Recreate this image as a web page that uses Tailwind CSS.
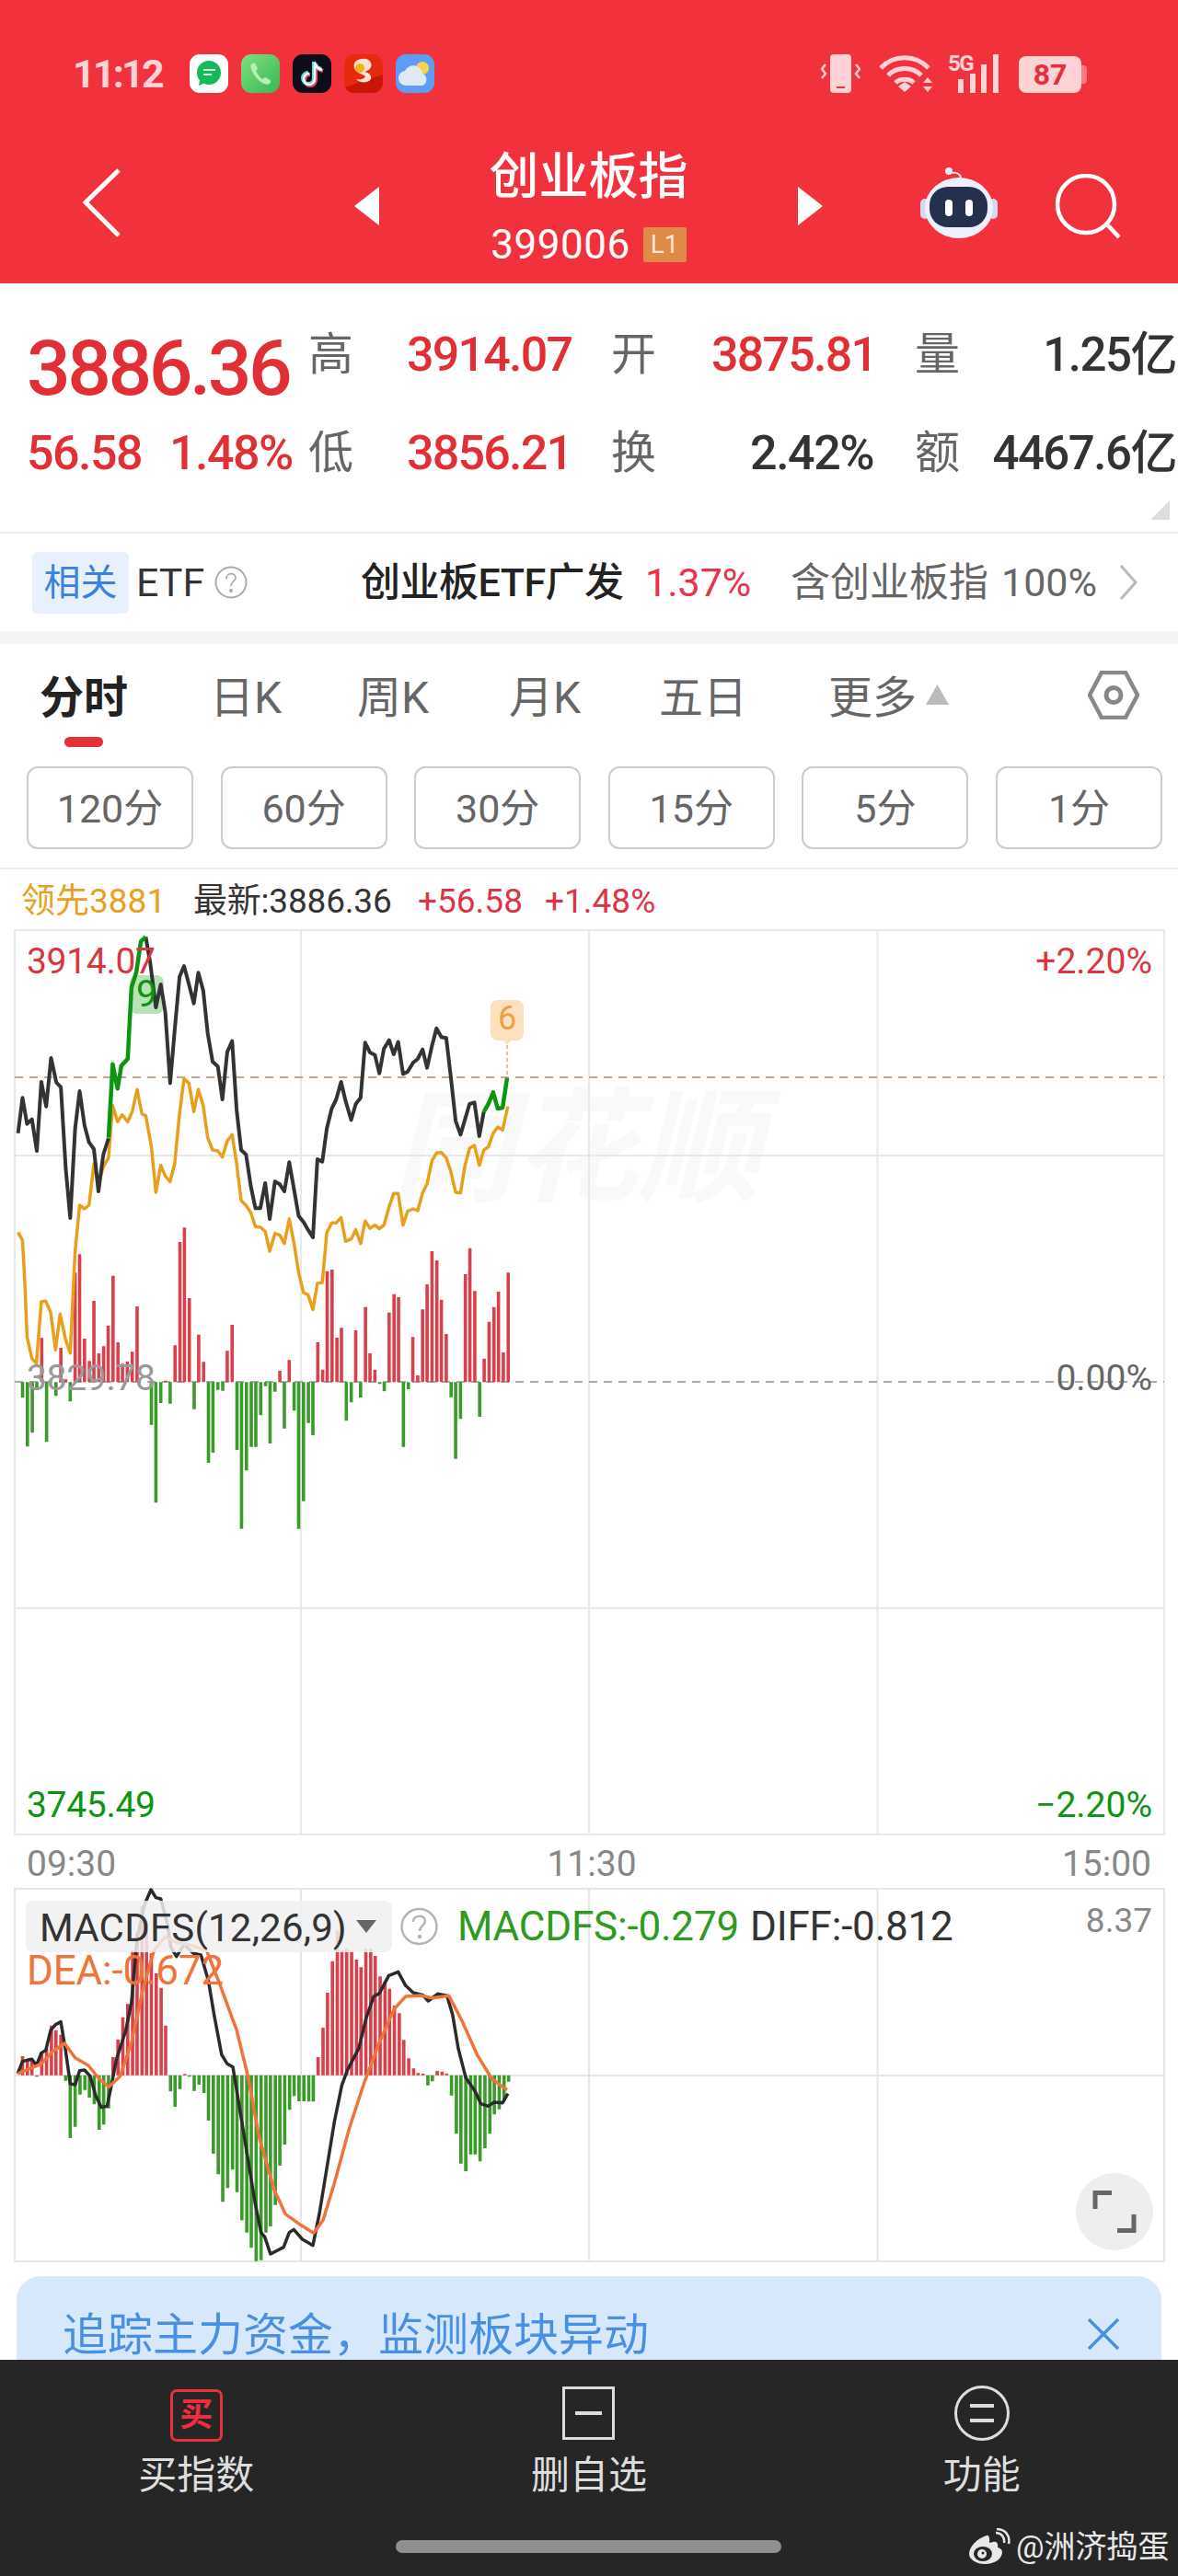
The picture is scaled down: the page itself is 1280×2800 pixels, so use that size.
<!DOCTYPE html>
<html lang="zh-CN">
<head>
    <meta charset="UTF-8">
    <meta name="viewport" content="width=device-width, initial-scale=1.0">
    <title>创业板指</title>
    <script src="https://cdn.jsdelivr.net/npm/@tailwindcss/browser@4"></script>
</head>
<body class="bg-white font-['Roboto','Noto_Sans_CJK_SC',sans-serif]">
<div class="w-[1280px] h-[2800px] flex flex-col overflow-hidden">

    <!-- Red header -->
    <header class="h-[308px] shrink-0 bg-[#f1323c] text-white">
        <div class="h-[160px] flex items-start">
            <span class="ml-[79px] mt-[55px] w-[107px] text-[43px] leading-[50px] font-bold tracking-[-2.8px] text-[#ffd3d6]">11:12</span>
            <div class="ml-[20px] mt-[59px] flex gap-[14px]">
                <svg class="w-[42px] h-[42px] rounded-[11px]" viewBox="0 0 42 42"><rect width="42" height="42" fill="#fff"/><circle cx="21" cy="20" r="13" fill="#16b95a"/><path d="M11 28l-1 6 7-3z" fill="#16b95a"/><path d="M15 17h13M15 22h9" stroke="#d8f5e2" stroke-width="2"/></svg>
                <svg class="w-[42px] h-[42px] rounded-[11px]" viewBox="0 0 42 42"><defs><linearGradient id="ph" x1="0" y1="0" x2="1" y2="1"><stop offset="0" stop-color="#7fe07c"/><stop offset="1" stop-color="#38b755"/></linearGradient></defs><rect width="42" height="42" fill="url(#ph)"/><path d="M11 11c-2 2 1 9 6 15s11 8 14 6c2-2 1-4-1-5l-4-2-3 2c-3-2-5-5-7-9l2-2-2-5c-1-2-3-2-5 0z" fill="#b6efb4"/></svg>
                <svg class="w-[42px] h-[42px] rounded-[11px]" viewBox="0 0 42 42"><rect width="42" height="42" fill="#0c0d18"/><path d="M24 9v18a6 6 0 1 1-6-6M24 9c1 5 4 7 8 8" fill="none" stroke="#f0456a" stroke-width="4" transform="translate(1 1)"/><path d="M24 9v18a6 6 0 1 1-6-6M24 9c1 5 4 7 8 8" fill="none" stroke="#54e3e6" stroke-width="4" transform="translate(-1 -1)"/><path d="M24 9v18a6 6 0 1 1-6-6M24 9c1 5 4 7 8 8" fill="none" stroke="#fff" stroke-width="2.4"/></svg>
                <svg class="w-[42px] h-[42px] rounded-[11px]" viewBox="0 0 42 42"><rect width="42" height="42" fill="#e52a0e"/><path d="M0 36L42 22v20H0z" fill="#c91608"/><path d="M12 8c6-5 15-4 17 1 2 6-3 9-7 10 5 1 8 4 7 8-2 4-12 5-16 0 4 1 9 0 10-3-3-3-10-3-12-9-1-3 0-5 1-7z" fill="#fbe3d3"/><circle cx="17" cy="15" r="5" fill="#f3b21a"/></svg>
                <svg class="w-[42px] h-[42px] rounded-[11px]" viewBox="0 0 42 42"><rect width="42" height="42" fill="#5f9df5"/><circle cx="29" cy="15" r="7" fill="#f7d34f"/><path d="M12 34a8 8 0 0 1-2-16 10 10 0 0 1 19 3 7 7 0 0 1 0 13z" fill="#dfeaf2"/></svg>
            </div>
            <div class="ml-auto mt-[59px] mr-[97px] flex items-start">
                <svg class="w-[43px] h-[42px]" viewBox="0 0 43 42" fill="#ffd3d6"><rect x="10" y="0" width="23" height="42" rx="4"/><rect x="17" y="35" width="9" height="2" fill="#f1323c"/><path d="M5 11l-4 5 4 5-4 5M38 11l4 5-4 5 4 5" fill="none" stroke="#ffd3d6" stroke-width="2.4"/></svg>
                <svg class="ml-[20px] w-[58px] h-[42px]" viewBox="0 0 58 42" fill="none" stroke="#ffd3d6" stroke-width="5"><path d="M2 15c14-15 38-15 52 0"/><path d="M10 23c9-10 27-10 36 0"/><path d="M18 31c5-5 15-5 20 0"/><path d="M21 35l7-5 7 5-7 6z" fill="#ffd3d6" stroke="none"/><path d="M48 31l5-6 5 6zM48 35h10l-5 6z" fill="#ffd3d6" stroke="none"/></svg>
                <div class="relative ml-[17px] w-[56px] h-[42px]">
                    <span class="absolute left-0 -top-[3px] text-[24px] leading-[26px] font-bold tracking-[-1.500px] text-[#ffd3d6]">5G</span>
                    <svg class="absolute left-0 top-0 w-[56px] h-[42px]" viewBox="0 0 56 42" fill="#ffd3d6"><rect x="11" y="27" width="6" height="15"/><rect x="24" y="21" width="6" height="21"/><rect x="36" y="11" width="6" height="31"/><rect x="49" y="0" width="6" height="42"/></svg>
                </div>
                <div class="relative ml-[21px] w-[76px] h-[40px] mt-[2px]">
                    <div class="w-[68px] h-[40px] rounded-[8px] bg-[#ffd3d6] text-[#e5303b] text-[32px] leading-[40px] font-bold text-center">87</div>
                    <div class="absolute right-[2px] top-[10px] w-[6px] h-[20px] rounded-r-[4px] bg-[#ff7b83]"></div>
                </div>
            </div>
        </div>
        <div class="h-[148px] flex items-start">
            <svg class="ml-[90px] mt-[23px] w-[41px] h-[75px]" viewBox="0 0 41 75" fill="none" stroke="#fff" stroke-width="5"><path d="M39 2L3 37l36 36"/></svg>
            <svg class="ml-[254px] mt-[43px] w-[27px] h-[42px]" viewBox="0 0 27 42" fill="#fff"><path d="M27 0v42L0 21z"/></svg>
            <div class="w-[455px] flex flex-col items-center">
                <div class="mt-[3px] h-[60px] text-[54px] leading-[60px] font-medium">创业板指</div>
                <div class="mt-[24px] flex items-center h-[38px]">
                    <span class="text-[44px] leading-[38px] tracking-[0.5px]">399006</span>
                    <span class="ml-[14px] w-[47px] h-[38px] bg-[#e08a4a] text-[#fde8d5] text-[28px] leading-[38px] text-center rounded-[2px]">L1</span>
                </div>
            </div>
            <svg class="mt-[43px] w-[27px] h-[42px]" viewBox="0 0 27 42" fill="#fff"><path d="M0 0v42l27-21z"/></svg>
            <svg class="ml-[106px] mt-[22px] w-[84px] h-[77px]" viewBox="0 0 84 77">
                <path d="M44 12c0-5-5-7-9-6" fill="none" stroke="#eef" stroke-width="2"/><circle cx="31" cy="4" r="4" fill="#e8ebfa"/>
                <rect x="0" y="34" width="10" height="22" rx="5" fill="#d5d8f2"/><rect x="74" y="34" width="10" height="22" rx="5" fill="#d5d8f2"/>
                <ellipse cx="42" cy="44" rx="37" ry="33" fill="#eff0fb"/>
                <rect x="10" y="21" width="63" height="44" rx="20" fill="#25304f"/>
                <rect x="27" y="35" width="8" height="18" rx="4" fill="#fff"/><rect x="49" y="35" width="8" height="18" rx="4" fill="#fff"/>
            </svg>
            <svg class="ml-[63px] mt-[29px] w-[72px] h-[72px]" viewBox="0 0 72 72" fill="none" stroke="#fff" stroke-width="4.5"><circle cx="33" cy="33" r="31"/><path d="M56 55l13 14"/></svg>
        </div>
    </header>

    <!-- Quote numbers -->
    <section class="h-[272px] shrink-0 pt-[33px] pl-[29px] pr-[2px] border-b-2 border-[#eeeeee] relative">
        <div class="flex items-center h-[90px]">
            <div class="w-[306px] mt-[30px] text-[#e03035] text-[84px] leading-[90px] font-medium tracking-[-3.5px] whitespace-nowrap">3886.36</div>
            <div class="w-[107px] text-[49px] text-[#666666]">高</div>
            <div class="w-[222px] text-[52px] text-[#e03035] font-medium tracking-[-1.8px]">3914.07</div>
            <div class="w-[109px] text-[49px] text-[#666666]">开</div>
            <div class="w-[171px] text-[52px] text-[#e03035] font-medium tracking-[-1.8px] text-right">3875.81</div>
            <div class="ml-[50px] w-[60px] text-[49px] text-[#666666]">量</div>
            <div class="flex-1 text-[51px] text-[#333333] font-medium tracking-[-1.5px] text-right">1.25亿</div>
        </div>
        <div class="mt-[17px] flex items-center h-[90px]">
            <div class="w-[306px] flex text-[#e03035] text-[52px] font-medium tracking-[-1.5px]"><span class="w-[155px]">56.58</span><span>1.48%</span></div>
            <div class="w-[107px] text-[49px] text-[#666666]">低</div>
            <div class="w-[222px] text-[52px] text-[#e03035] font-medium tracking-[-1.8px]">3856.21</div>
            <div class="w-[109px] text-[49px] text-[#666666]">换</div>
            <div class="w-[176px] text-[52px] text-[#333333] font-medium tracking-[-1.5px] text-right">2.42%</div>
            <div class="ml-[45px] w-[60px] text-[49px] text-[#666666]">额</div>
            <div class="flex-1 text-[51px] text-[#333333] font-medium tracking-[-1.5px] text-right whitespace-nowrap">4467.6亿</div>
        </div>
        <svg class="absolute left-[1250px] top-[236px] w-[21px] h-[21px]" viewBox="0 0 21 21" fill="#dddddd"><path d="M21 0v21H0z"/></svg>
    </section>

    <!-- Related ETF row -->
    <section class="h-[106px] shrink-0 flex items-center text-[43px] whitespace-nowrap">
        <span class="ml-[35px] w-[105px] h-[67px] rounded-[6px] bg-[#e8f0fd] text-[#3b82e0] text-[40px] leading-[67px] text-center">相关</span>
        <span class="ml-[8px] text-[#333333] w-[85px]">ETF</span>
        <svg class="w-[36px] h-[36px]" viewBox="0 0 36 36" fill="none" stroke="#aaaaaa" stroke-width="2"><circle cx="18" cy="18" r="16.5"/><path d="M13 14c0-7 10-7 10-1 0 4-5 4-5 9" stroke-width="1.8"/><circle cx="18" cy="27" r="1" fill="#aaa"/></svg>
        <span class="ml-[123px] w-[309px] text-[#222222] font-medium tracking-[-0.5px]">创业板ETF广发</span>
        <span class="text-[#e8334a] w-[158px]">1.37%</span>
        <span class="text-[#666666] w-[229px]">含创业板指</span>
        <span class="text-[#666666] w-[128px]">100%</span>
        <svg class="w-[20px] h-[38px]" viewBox="0 0 20 38" fill="none" stroke="#bbbbbb" stroke-width="3"><path d="M2 1l16 18L2 37"/></svg>
    </section>
    <div class="h-[14px] shrink-0 bg-[#f4f4f4]"></div>

    <!-- Period tabs -->
    <section class="h-[133px] shrink-0 relative flex items-start text-[48px] text-[#666666]">
        <div class="ml-[43px] mt-[29px] w-[185px] font-bold text-[#222222] leading-[60px]">分时</div>
        <div class="mt-[29px] w-[160px] leading-[60px]">日K</div>
        <div class="mt-[29px] w-[165px] leading-[60px]">周K</div>
        <div class="mt-[29px] w-[163px] leading-[60px]">月K</div>
        <div class="mt-[29px] w-[184px] leading-[60px]">五日</div>
        <div class="mt-[29px] w-[106px] leading-[60px]">更多</div>
        <svg class="mt-[44px] w-[25px] h-[22px]" viewBox="0 0 25 22" fill="#bbbbbb"><path d="M12.5 0L25 22H0z"/></svg>
        <svg class="ml-[151px] mt-[29px] w-[56px] h-[53px]" viewBox="0 0 56 53" fill="none" stroke="#888888" stroke-width="4.500"><path d="M15 2h26l13 24.5L41 51H15L2 26.5z"/><circle cx="28" cy="26.5" r="8" stroke-width="5"/></svg>
        <div class="absolute left-[70px] top-[101px] w-[42px] h-[11px] rounded-full bg-[#e43035]"></div>
    </section>

    <!-- Interval buttons -->
    <section class="h-[112px] shrink-0 pl-[29px] flex gap-[29.6px] items-start border-b-2 border-[#eeeeee] text-[43px] text-[#666666]">
        <div class="w-[181px] h-[90px] rounded-[12px] border-2 border-[#cccccc] flex items-center justify-center pt-[3px]">120分</div>
        <div class="w-[181px] h-[90px] rounded-[12px] border-2 border-[#cccccc] flex items-center justify-center pt-[3px]">60分</div>
        <div class="w-[181px] h-[90px] rounded-[12px] border-2 border-[#cccccc] flex items-center justify-center pt-[3px]">30分</div>
        <div class="w-[181px] h-[90px] rounded-[12px] border-2 border-[#cccccc] flex items-center justify-center pt-[3px]">15分</div>
        <div class="w-[181px] h-[90px] rounded-[12px] border-2 border-[#cccccc] flex items-center justify-center pt-[3px]">5分</div>
        <div class="w-[181px] h-[90px] rounded-[12px] border-2 border-[#cccccc] flex items-center justify-center pt-[3px]">1分</div>
    </section>

    <!-- Chart legend -->
    <section class="h-[60px] shrink-0 pt-[10px] flex items-center text-[37px] whitespace-nowrap">
        <span class="ml-[23px] w-[187px] text-[#e8a020]">领先3881</span>
        <span class="w-[244px] text-[#333333] tracking-[-0.2px]">最新:3886.36</span>
        <span class="w-[138px] text-[#dc3545]">+56.58</span>
        <span class="text-[#dc3545]">+1.48%</span>
    </section>

    <!-- Minute chart -->
    <section class="relative h-[995px] shrink-0">
        <span class="absolute left-[425px] top-[170px] text-[134px] leading-[150px] font-bold italic text-[#f9f9f9]">同花顺</span>
        <svg class="absolute left-0 top-0" width="1280" height="995" viewBox="0 1005 1280 995" fill="none">
            <path d="M16 1011H1265V1994H16ZM327 1011V1994M640 1011V1994M953.500 1011V1994M16 1256H1265M16 1748H1265" stroke="#e8e8e8" stroke-width="2"/>
            <path d="M16 1171H1265" stroke="#c4a98c" stroke-width="2" stroke-dasharray="9 7"/>
            <path d="M16 1502H1265" stroke="#aaaaaa" stroke-width="2" stroke-dasharray="9 7"/>
            <path d="M141 1068a8 8 0 0 1 8-8h21a8 8 0 0 1 8 8v26a8 8 0 0 1-8 8h-21a8 8 0 0 1-8-8z" fill="#b7e3b7"/>
            <path d="M533 1095a8 8 0 0 1 8-8h20a8 8 0 0 1 8 8v28a8 8 0 0 1-8 8h-6l-4 5-4-5h-6a8 8 0 0 1-8-8z" fill="#fde0bd"/>
            <path d="M551 1136V1171" stroke="#e8b060" stroke-width="1.500" stroke-dasharray="4 3"/>
            <!-- volume bars -->
            <g transform="translate(0 1360) scale(0.40816 0.33333)" stroke-width="3.600">
                <path vector-effect="non-scaling-stroke" stroke="#d9404a" d="M111 427V283M162 427V315M175 427V418M200 427V70M212 427V10M225 427V285M238 427V358M250 427V162M263 427V333M276 427V310M288 427V243M301 427V80M314 427V297M326 427V367M339 427V360M352 427V328M365 427V180M441 427V422M466 427V307M479 427V-30M491 427V-77M504 427V153M529 427V272M542 427V361M605 427V325M618 427V240M745 427V390M770 427V355M846 427V297M859 427V386M871 427V65M884 427V60M897 427V282M909 427V250M947 427V258M973 427V182M985 427V333M998 427V387M1036 427V200M1049 427V140M1061 427V150M1099 427V280M1112 427V405M1125 427V190M1137 427V108M1150 427V0M1163 427V30M1175 427V158M1188 427V270M1239 427V75M1251 427V-10M1264 427V130M1289 427V350M1302 427V230M1315 427V182M1327 427V132M1340 427V330M1353 427V70"/>
                <path vector-effect="non-scaling-stroke" stroke="#3a9b2a" d="M60 427V478M73 427V637M86 427V592M98 427V445M124 427V622M149 427V472M187 427V490M403 427V566M415 427V820M428 427V495M453 427V497M517 427V515M555 427V690M567 427V657M580 427V452M593 427V455M631 427V648M643 427V905M656 427V715M669 427V638M681 427V638M694 427V535M707 427V440M719 427V627M732 427V458M757 427V578M783 427V520M795 427V905M808 427V815M821 427V560M833 427V600M922 427V553M935 427V493M960 427V477M1011 427V433M1023 427V457M1074 427V638M1087 427V450M1201 427V476M1213 427V677M1226 427V547M1277 427V540"/>
            </g>
            <!-- price and average lines -->
            <g transform="translate(0 950) scale(0.40816 0.33333)" stroke-linejoin="round">
                <path vector-effect="non-scaling-stroke" stroke="#e8a01c" stroke-width="3.500" d="M48 1168L60 1195L66 1330L72 1510L85 1580L97 1595L110 1395L122 1393L135 1430L148 1552L160 1435L175 1520L187 1562L200 1230L212 1080L225 1092L237 1080L250 945L262 1010L275 955L289 925L300 755L313 808L325 785L340 808L352 775L365 703L378 783L388 788L403 890L415 1038L428 950L440 985L453 1003L465 945L478 780L490 668L503 682L516 775L528 703L541 755L553 860L566 900L580 903L592 923L605 870L618 850L630 945L642 1065L655 1080L668 1105L680 1150L693 1152L706 1165L718 1230L732 1172L745 1178L757 1205L770 1125L783 1205L795 1300L808 1365L820 1372L833 1420L845 1335L858 1332L870 1170L883 1138L895 1138L908 1120L920 1198L935 1190L947 1160L960 1205L972 1132L985 1155L998 1145L1010 1157L1022 1145L1036 1085L1048 1042L1060 1042L1073 1145L1085 1100L1100 1092L1112 1098L1125 1040L1137 1010L1150 935L1162 910L1175 908L1188 925L1200 970L1213 1038L1226 1040L1238 950L1250 895L1263 885L1276 950L1288 900L1300 890L1313 845L1325 825L1338 835L1352 758"/>
                <path vector-effect="non-scaling-stroke" stroke="#333333" stroke-width="4" d="M48 845L60 730L72 815L85 800L98 903L110 678L123 758L136 600L150 680L162 695L175 960L187 1122L200 830L212 708L225 820L237 875L250 897L262 1035L275 915L289 862M388 205L400 290L415 435L428 360L440 450L453 682L465 510L478 335L490 300L503 360L516 422L528 322L541 380L553 520L566 612L580 628L592 735L605 580L618 545L630 770L642 900L655 915L668 1020L680 1090L693 1090L706 1008L718 1125L732 1003L745 1012L757 1035L770 940L783 1030L795 1115L808 1135L820 1160L833 1185L845 930L858 938L870 830L883 765L895 735L908 678L920 740L935 802L947 750L960 730L972 550L985 582L998 590L1010 650L1022 570L1036 542L1048 588L1060 548L1073 652L1085 645L1100 615L1112 603L1125 572L1137 632L1150 560L1162 503L1175 532L1188 535L1200 660L1213 805L1226 850L1238 800L1250 750L1263 745L1276 855L1288 775"/>
                <path vector-effect="non-scaling-stroke" stroke="#0c9412" stroke-width="4.500" d="M289 860L300 620L313 700L323 625L340 603L350 370L363 320L375 220L388 205M1288 775L1300 750L1313 712L1325 765L1338 762L1350 665"/>
            </g>
        </svg>
        <span class="absolute left-[29px] top-[17px] text-[39px] leading-[46px] text-[#d9363e] tracking-[-0.3px]">3914.07</span>
        <span class="absolute left-[148px] top-[54px] text-[40px] leading-[44px] text-[#0c9412]">9</span>
        <span class="absolute left-[541px] top-[80px] text-[36px] leading-[44px] text-[#f0a040]">6</span>
        <span class="absolute right-[28px] top-[17px] text-[39px] leading-[46px] text-[#d9363e]">+2.20%</span>
        <span class="absolute left-[29px] top-[470px] text-[39px] leading-[46px] text-[#999999] tracking-[-0.3px]">3829.78</span>
        <span class="absolute right-[28px] top-[470px] text-[39px] leading-[46px] text-[#666666]">0.00%</span>
        <span class="absolute left-[29px] top-[934px] text-[39px] leading-[46px] text-[#0c9412] tracking-[-0.3px]">3745.49</span>
        <span class="absolute right-[28px] top-[934px] text-[39px] leading-[46px] text-[#0c9412]">−2.20%</span>
    </section>

    <!-- Time axis -->
    <section class="h-[44px] shrink-0 flex justify-between items-center px-[29px] pt-[8px] text-[39px] text-[#888888]">
        <span>09:30</span><span class="ml-[6px]">11:30</span><span>15:00</span>
    </section>

    <!-- MACD chart -->
    <section class="relative h-[430px] shrink-0">
        <svg class="absolute left-0 top-0" width="1280" height="430" viewBox="0 2044 1280 430" fill="none">
            <path d="M16 2053H1265V2458H16ZM327 2053V2458M640 2053V2458M953.500 2053V2458M16 2256H1265" stroke="#e6e6e6" stroke-width="2"/>
            <g transform="translate(0 2030) scale(0.40816 0.33333)" stroke-linejoin="round">
                <path vector-effect="non-scaling-stroke" stroke="#d9404a" stroke-width="3.600" d="M60 677V615M73 677V628M85 677V625M111 677V600M124 677V590M137 677V515M149 677V530M162 677V545M301 677V618M314 677V560M327 677V488M340 677V445M353 677V270M365 677V210M378 677V125M390 677V210M403 677V280M416 677V345M429 677V392M441 677V515M492 677V673M847 677V618M860 677V522M872 677V408M885 677V305M898 677V205M910 677V270M923 677V265M936 677V272M949 677V300M961 677V325M974 677V265M987 677V265M999 677V288M1012 677V355M1025 677V372M1037 677V395M1050 677V450M1063 677V475M1075 677V562M1088 677V622M1101 677V655M1113 677V670M1126 677V672M1164 677V663M1177 677V665M1189 677V671"/>
                <path vector-effect="non-scaling-stroke" stroke="#3a9b2a" stroke-width="3.600" d="M98 677V682M175 677V695M187 677V882M200 677V845M213 677V740M226 677V725M238 677V750M251 677V772M264 677V855M276 677V838M289 677V785M454 677V730M466 677V780M479 677V722M504 677V682M517 677V728M530 677V708M543 677V735M555 677V825M568 677V933M581 677V1000M593 677V1090M606 677V1045M619 677V985M631 677V1058M644 677V1150M657 677V1190M669 677V1240M682 677V1283M695 677V1280M708 677V1190M720 677V1170M733 677V1100M745 677V972M758 677V903M771 677V790M783 677V745M796 677V762M809 677V762M822 677V763M834 677V763M1139 677V710M1151 677V697M1202 677V743M1215 677V868M1227 677V965M1240 677V990M1253 677V935M1265 677V935M1278 677V958M1291 677V915M1304 677V868M1316 677V805M1329 677V788M1342 677V760M1354 677V698"/>
                <path vector-effect="non-scaling-stroke" stroke="#2b2b2b" stroke-width="3.500" d="M47 672L60 632L72 628L85 625L97 645L110 605L122 595L135 530L148 512L162 503L175 600L187 705L200 708L212 662L225 660L240 680L255 745L270 782L285 778L295 720L310 625L335 530L350 440L365 230L385 120L402 72L415 98L428 102L445 180L455 260L470 290L490 250L515 280L535 285L555 370L570 480L590 610L605 640L620 650L640 800L660 950L680 1100L695 1190L705 1205L720 1260L755 1238L770 1190L782 1180L805 1212L833 1232L850 1130L870 980L890 830L910 710L925 660L955 590L975 490L995 420L1010 410L1035 352L1060 340L1080 385L1100 408L1125 415L1140 435L1165 412L1190 418L1205 480L1220 590L1240 685L1265 730L1280 770L1300 778L1315 765L1338 767L1352 737"/>
                <path vector-effect="non-scaling-stroke" stroke="#f0743a" stroke-width="3.500" d="M47 672L80 655L110 640L140 600L172 573L200 620L235 645L265 690L290 715L320 680L350 570L380 400L410 270L440 225L470 245L500 250L550 270L585 380L630 530L660 680L690 880L730 1050L760 1130L800 1165L835 1192L860 1150L890 1030L930 850L970 700L1010 570L1050 460L1080 420L1120 417L1150 425L1195 418L1230 500L1270 610L1310 690L1350 725"/>
            </g>
        </svg>
        <div class="absolute left-[28px] top-[22px] w-[398px] h-[56px] rounded-[8px] bg-[#f0f0f0]/85 flex items-center pl-[15px] pt-[2px] text-[42px] text-[#333333] tracking-[0.2px] whitespace-nowrap">MACDFS(12,26,9)</div>
        <svg class="absolute left-[387px] top-[43px] w-[22px] h-[14px]" viewBox="0 0 22 14" fill="#666666"><path d="M0 0h22L11 14z"/></svg>
        <svg class="absolute left-[435px] top-[29px] w-[41px] h-[42px]" viewBox="0 0 41 42" fill="none" stroke="#b5b5b5" stroke-width="2.500"><circle cx="20.500" cy="21" r="19"/><path d="M14 16c0-8 13-8 13-1 0 5-6 5-6 11"/><circle cx="21" cy="32" r="1" fill="#b5b5b5"/></svg>
        <span class="absolute left-[497px] top-[27px] text-[44px] leading-[46px] text-[#2f9a22] tracking-[-0.2px]">MACDFS:-0.279</span>
        <span class="absolute left-[815px] top-[27px] text-[44px] leading-[46px] text-[#333333] tracking-[-0.2px]">DIFF:-0.812</span>
        <span class="absolute right-[28px] top-[21px] text-[37px] leading-[46px] text-[#888888]">8.37</span>
        <span class="absolute left-[29px] top-[75px] text-[44px] leading-[46px] text-[#f0743a] tracking-[-0.2px]">DEA:-0.672</span>
        <svg class="absolute left-[1169px] top-[318px] w-[84px] h-[84px]" viewBox="0 0 84 84" fill="none"><circle cx="42" cy="42" r="42" fill="#eeeeee"/><path d="M21 39V21.500H39M63 45V62.500H45" stroke="#666666" stroke-width="5"/></svg>
    </section>

    <!-- Blue banner, runs under the bottom bar -->
    <section class="mx-[18px] h-[120px] shrink-0 rounded-t-[26px] bg-[#d8e8fc] flex items-start text-[#4a90e2] mb-[-29px]">
        <span class="ml-[50px] mt-[37px] text-[49px] leading-[56px] whitespace-nowrap">追踪主力资金，监测板块异动</span>
        <svg class="ml-auto mr-[46px] mt-[46px] w-[34px] h-[34px]" viewBox="0 0 34 34" fill="none" stroke="#4a90e2" stroke-width="3.500"><path d="M1 1l32 32M33 1L1 33"/></svg>
    </section>

    <!-- Bottom bar -->
    <footer class="relative z-10 h-[235px] shrink-0 bg-[#262626] text-[#dddddd] text-[42px]">
        <div class="flex">
            <div class="w-[426.670px] flex flex-col items-center pt-[32px]">
                <div class="w-[57px] h-[57px] rounded-[7px] border-[3px] border-[#e5323c] text-[#ee2d3e] text-[36px] leading-[50px] font-bold text-center">买</div>
                <div class="mt-[12px] leading-[50px]">买指数</div>
            </div>
            <div class="w-[426.670px] flex flex-col items-center pt-[29px]">
                <svg class="w-[57px] h-[58px]" viewBox="0 0 57 58" fill="none" stroke="#dddddd" stroke-width="3"><rect x="1.500" y="1.500" width="54" height="55"/><path d="M14 29h29" stroke-width="4"/></svg>
                <div class="mt-[14px] leading-[50px]">删自选</div>
            </div>
            <div class="w-[426.670px] flex flex-col items-center pt-[28px]">
                <svg class="w-[60px] h-[60px]" viewBox="0 0 60 60" fill="none" stroke="#dddddd" stroke-width="3"><circle cx="30" cy="30" r="28.500"/><path d="M17 22h26M17 38h26" stroke-width="4"/></svg>
                <div class="mt-[13px] leading-[50px]">功能</div>
            </div>
        </div>
        <div class="absolute left-[430px] top-[196px] w-[419px] h-[14px] rounded-full bg-[#8f8f8f]"></div>
        <div class="absolute left-[1052px] top-[181px] flex items-center">
            <svg class="w-[46px] h-[40px]" viewBox="0 0 46 40"><path d="M20 8C10 11 1 20 1 28c0 6 8 11 17 11 11 0 19-6 19-13 0-4-5-5-5-5 1-4-1-7-5-6l-4 1c1-6-1-9-3-8z" fill="#e8e8e8"/><ellipse cx="16" cy="28" rx="10" ry="8" fill="#262626"/><circle cx="15" cy="28" r="5" fill="#e8e8e8"/><circle cx="16" cy="27" r="1.500" fill="#262626"/><path d="M30 5c6 0 10 5 9 11M31 1c9 0 15 7 13 16" fill="none" stroke="#e8e8e8" stroke-width="2.500"/></svg>
            <span class="ml-[6px] text-[34px] leading-[44px] text-[#e8e8e8] whitespace-nowrap">@洲济捣蛋</span>
        </div>
    </footer>
</div>
</body>
</html>
